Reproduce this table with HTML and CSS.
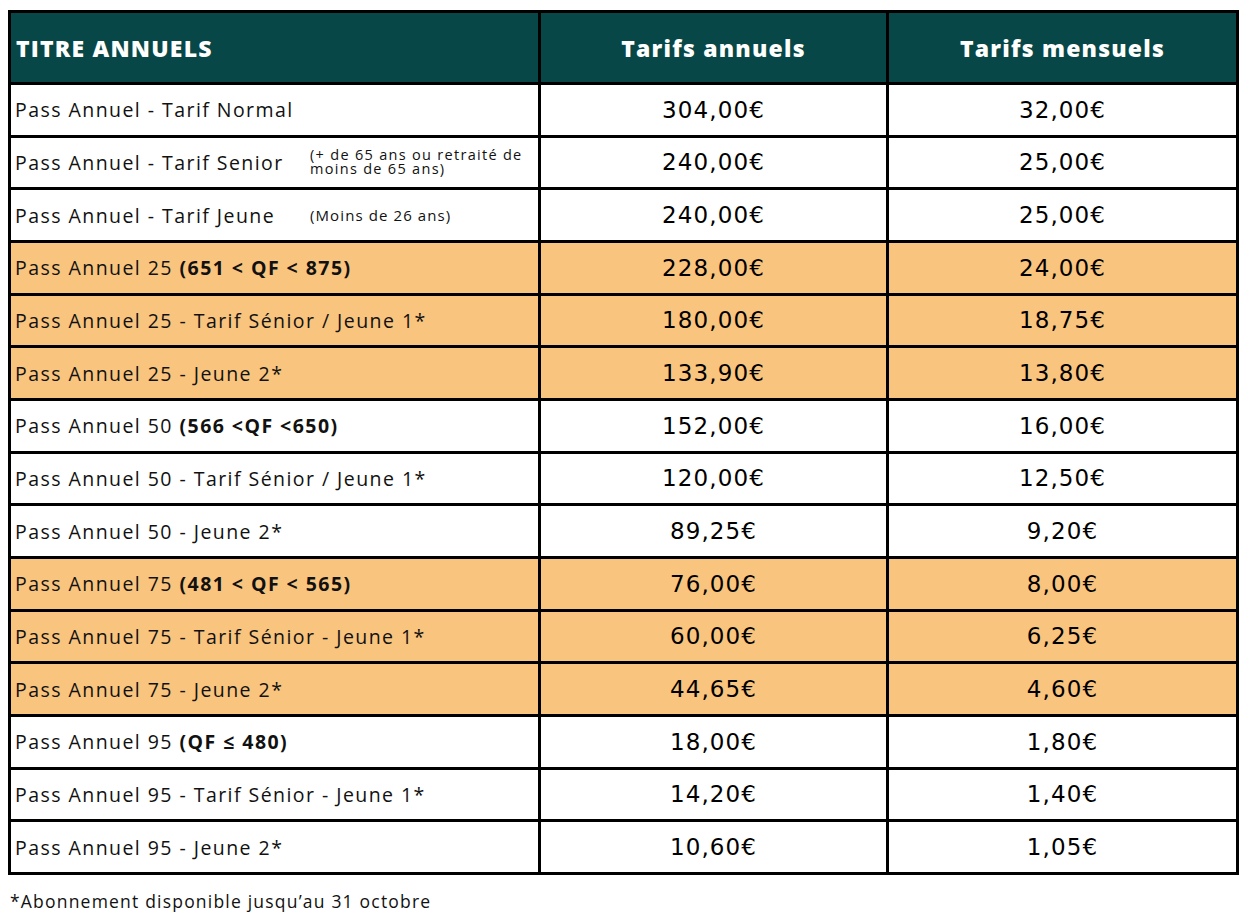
FILE: index.html
```html
<!DOCTYPE html>
<html lang="fr">
<head>
<meta charset="utf-8">
<title>Titres annuels</title>
<link rel="stylesheet" href="styles.css">
</head>
<body>
<div class="page">
  <table class="tarifs">
    <colgroup>
      <col class="c1"><col class="c2"><col class="c3">
    </colgroup>
    <thead>
      <tr>
        <th class="title">TITRE ANNUELS</th>
        <th>Tarifs annuels</th>
        <th>Tarifs mensuels</th>
      </tr>
    </thead>
    <tbody>
      <tr><td class="name">Pass Annuel - Tarif Normal</td><td class="price">304,00€</td><td class="price">32,00€</td></tr>
      <tr><td class="name"><div class="withnote"><span>Pass Annuel - Tarif Senior</span><span class="note two">(+ de 65 ans ou retraité de<br>moins de 65 ans)</span></div></td><td class="price">240,00€</td><td class="price">25,00€</td></tr>
      <tr><td class="name"><div class="withnote"><span>Pass Annuel - Tarif Jeune</span><span class="note">(Moins de 26 ans)</span></div></td><td class="price">240,00€</td><td class="price">25,00€</td></tr>
      <tr class="hl"><td class="name">Pass Annuel 25 <b>(651 &lt; QF &lt; 875)</b></td><td class="price">228,00€</td><td class="price">24,00€</td></tr>
      <tr class="hl"><td class="name">Pass Annuel 25 - Tarif Sénior / Jeune 1*</td><td class="price">180,00€</td><td class="price">18,75€</td></tr>
      <tr class="hl"><td class="name">Pass Annuel 25 - Jeune 2*</td><td class="price">133,90€</td><td class="price">13,80€</td></tr>
      <tr><td class="name">Pass Annuel 50 <b>(566 &lt;QF &lt;650)</b></td><td class="price">152,00€</td><td class="price">16,00€</td></tr>
      <tr><td class="name">Pass Annuel 50 - Tarif Sénior / Jeune 1*</td><td class="price">120,00€</td><td class="price">12,50€</td></tr>
      <tr><td class="name">Pass Annuel 50 - Jeune 2*</td><td class="price">89,25€</td><td class="price">9,20€</td></tr>
      <tr class="hl"><td class="name">Pass Annuel 75 <b>(481 &lt; QF &lt; 565)</b></td><td class="price">76,00€</td><td class="price">8,00€</td></tr>
      <tr class="hl"><td class="name">Pass Annuel 75 - Tarif Sénior - Jeune 1*</td><td class="price">60,00€</td><td class="price">6,25€</td></tr>
      <tr class="hl"><td class="name">Pass Annuel 75 - Jeune 2*</td><td class="price">44,65€</td><td class="price">4,60€</td></tr>
      <tr><td class="name">Pass Annuel 95 <b>(QF ≤ 480)</b></td><td class="price">18,00€</td><td class="price">1,80€</td></tr>
      <tr><td class="name">Pass Annuel 95 - Tarif Sénior - Jeune 1*</td><td class="price">14,20€</td><td class="price">1,40€</td></tr>
      <tr><td class="name">Pass Annuel 95 - Jeune 2*</td><td class="price">10,60€</td><td class="price">1,05€</td></tr>
    </tbody>
  </table>
  <p class="footnote">*Abonnement disponible jusqu’au 31 octobre</p>
</div>
</body>
</html>
```

FILE: styles.css
```css
html, body {
  margin: 0;
  padding: 0;
  background: #ffffff;
}

.page {
  padding: 10px 0 0 8px;
  font-family: "Open Sans", "Noto Sans", sans-serif;
  color: #111111;
}

.tarifs {
  border-collapse: separate;
  border-spacing: 0;
  border-top: 3px solid #000;
  border-left: 3px solid #000;
  table-layout: fixed;
  width: 1231px;
}

.c1 { width: 530px; }
.c2 { width: 348px; }
.c3 { width: 350px; }

.tarifs th,
.tarifs td {
  border-right: 3px solid #000;
  border-bottom: 3px solid #000;
  padding: 0;
  box-sizing: border-box;
}

.tarifs th {
  background: #084747;
  color: #ffffff;
  height: 72px;
  font-size: 23px;
  font-weight: 800;
  text-align: center;
  letter-spacing: 1.2px;
}

.tarifs th.title {
  text-align: left;
  padding-left: 5px;
}

.tarifs td {
  height: 52.67px;
  background: #ffffff;
}

.tarifs tr.hl td {
  background: #f9c47e;
}

.name {
  padding-left: 4px !important;
  font-size: 19.5px;
  letter-spacing: 1.45px;
  white-space: nowrap;
}

.name b {
  font-weight: 700;
}

.withnote {
  display: grid;
  grid-template-columns: 295px auto;
  align-items: center;
}

.note {
  font-size: 15px;
  letter-spacing: 1.1px;
}

.note.two {
  font-size: 14.5px;
  line-height: 14.5px;
  letter-spacing: 1.3px;
}

.price {
  text-align: center;
  font-family: "DejaVu Sans", sans-serif;
  font-size: 23px;
  letter-spacing: 1.1px;
  color: #000;
}

.footnote {
  margin: 14px 0 0 2px;
  font-size: 17.5px;
  letter-spacing: 1.2px;
}
```
